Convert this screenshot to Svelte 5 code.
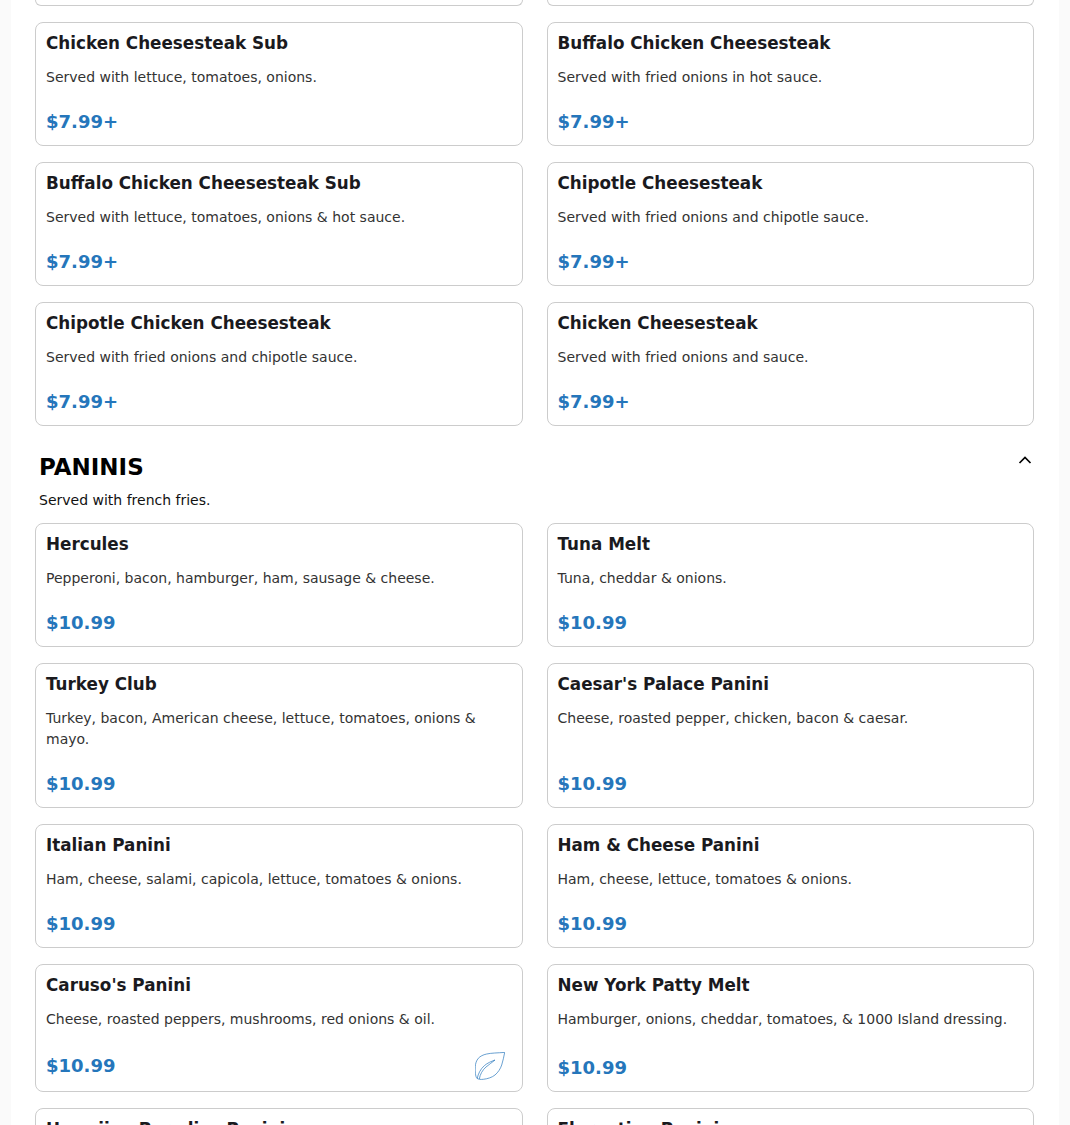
<script>
  const top = [
    { t: 'Chicken Cheesesteak Sub', d: 'Served with lettuce, tomatoes, onions.', p: '$7.99+' },
    { t: 'Buffalo Chicken Cheesesteak', d: 'Served with fried onions in hot sauce.', p: '$7.99+' },
    { t: 'Buffalo Chicken Cheesesteak Sub', d: 'Served with lettuce, tomatoes, onions & hot sauce.', p: '$7.99+' },
    { t: 'Chipotle Cheesesteak', d: 'Served with fried onions and chipotle sauce.', p: '$7.99+' },
    { t: 'Chipotle Chicken Cheesesteak', d: 'Served with fried onions and chipotle sauce.', p: '$7.99+' },
    { t: 'Chicken Cheesesteak', d: 'Served with fried onions and sauce.', p: '$7.99+' }
  ];
  const paninis = [
    { t: 'Hercules', d: 'Pepperoni, bacon, hamburger, ham, sausage & cheese.', p: '$10.99' },
    { t: 'Tuna Melt', d: 'Tuna, cheddar & onions.', p: '$10.99' },
    { t: 'Turkey Club', d: 'Turkey, bacon, American cheese, lettuce, tomatoes, onions & mayo.', p: '$10.99' },
    { t: "Caesar's Palace Panini", d: 'Cheese, roasted pepper, chicken, bacon & caesar.', p: '$10.99' },
    { t: 'Italian Panini', d: 'Ham, cheese, salami, capicola, lettuce, tomatoes & onions.', p: '$10.99' },
    { t: 'Ham & Cheese Panini', d: 'Ham, cheese, lettuce, tomatoes & onions.', p: '$10.99' },
    { t: "Caruso's Panini", d: 'Cheese, roasted peppers, mushrooms, red onions & oil.', p: '$10.99', leaf: true },
    { t: 'New York Patty Melt', d: 'Hamburger, onions, cheddar, tomatoes, & 1000 Island dressing.', p: '$10.99' },
    { t: 'Hawaiian Paradise Panini', d: 'Ham, pineapple & cheese.', p: '$10.99' },
    { t: 'Florentine Panini', d: 'Chicken, spinach & cheese.', p: '$10.99' }
  ];
</script>

{#snippet card(item)}
  <article class="card">
    <h3>{item.t}</h3>
    <p class="desc">{item.d}</p>
    <div class="foot" class:tall={item.leaf}>
      <span class="price">{item.p}</span>
      {#if item.leaf}
        <svg class="leaf" viewBox="0 0 30 28" width="30" height="28" fill="none" stroke="#2a78bd" stroke-width="0.7" aria-hidden="true">
          <path d="M29.7 .4C23 .9 16 1 11.7 2C8 2.8 5.3 4.2 3.3 6.3C1.4 8.6 .4 11.5 .3 14.7C.1 17 .1 19.2 .4 21.3C.7 23.5 1 25.2 1.9 26.3C3.5 27.4 5.8 27.6 8.3 27.3C12.8 26.8 17 25.4 20 23C23.2 20.3 25.4 16.8 26.7 13C27.9 9.2 28.9 4.4 29.7 .4Z" />
          <path d="M2.3 26.3C3 22 5.5 17 9.5 13.5C12.5 11 16 9.5 20 8" />
          <path d="M4.3 27C5 22.5 7.5 18 11 15C14 12.5 17 10.5 20 8" />
        </svg>
      {/if}
    </div>
  </article>
{/snippet}

<main class="page">
  <div class="grid">
    <div class="stub"></div>
    <div class="stub"></div>
    {#each top as item}{@render card(item)}{/each}
  </div>

  <header class="head">
    <h2>PANINIS</h2>
    <svg class="chev" viewBox="0 0 14 10" width="14" height="10" fill="none" stroke="#000" stroke-width="1.7" aria-hidden="true">
      <path d="M1.5 8L7 2.5L12.5 8" />
    </svg>
  </header>
  <p class="sub">Served with french fries.</p>

  <div class="grid">
    {#each paninis as item}{@render card(item)}{/each}
  </div>
</main>

<style>
  :global(html), :global(body) {
    margin: 0;
    height: 1125px;
    overflow: hidden;
    background: #fafafa;
  }
  .page {
    box-sizing: border-box;
    width: 1048px;
    height: 1125px;
    margin-left: 11px;
    padding: 0 25px 0 24px;
    overflow: hidden;
    background: #fff;
    font-family: "DejaVu Sans", sans-serif;
  }
  .grid {
    display: grid;
    grid-template-columns: 1fr 1fr;
    column-gap: 24px;
    row-gap: 16.1px;
  }
  .stub {
    box-sizing: border-box;
    height: 5.5px;
    border: 1px solid #cccccc;
    border-top: 0;
    border-radius: 0 0 8px 8px;
  }
  .card {
    box-sizing: border-box;
    display: flex;
    flex-direction: column;
    padding: 8px 10px 11px;
    border: 1px solid #cccccc;
    border-radius: 8px;
    background: #fff;
  }
  h3 {
    margin: 0 0 12.7px;
    font-size: 16.8px;
    line-height: 24px;
    font-weight: 700;
    color: #1a1a1e;
  }
  .desc {
    margin: 0 0 21.3px;
    font-size: 14px;
    line-height: 21px;
    color: #333333;
  }
  .foot {
    display: flex;
    justify-content: space-between;
    align-items: center;
    margin-top: auto;
  }
  .foot.tall {
    padding-right: 7px;
  }
  .price {
    font-size: 18px;
    line-height: 24px;
    font-weight: 700;
    color: #2576bb;
  }
  .head {
    display: flex;
    justify-content: space-between;
    margin-top: 28.2px;
    padding: 0 2px 0 4px;
  }
  h2 {
    margin: 0;
    font-size: 23px;
    line-height: 27px;
    font-weight: 700;
    color: #000;
  }
  .chev {
    margin-top: 1px;
  }
  .sub {
    margin: 9px 0 11.6px 4px;
    font-size: 14px;
    line-height: 21px;
    color: #111;
  }
</style>
